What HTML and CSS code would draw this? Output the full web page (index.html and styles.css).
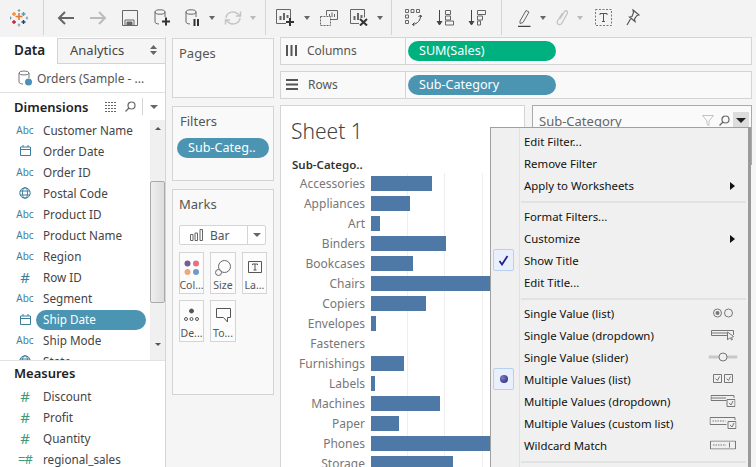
FILE: index.html
```html
<!DOCTYPE html>
<html lang="en">
<head>
    <meta charset="UTF-8">
    <title>Sheet 1 - Filter menu</title>
    <link rel="stylesheet" href="styles.css">
</head>
<body>
    <header class="toolbar">
        <div class="tool-group logo-group">
            <svg width="18" height="18" viewBox="0 0 18 18" fill="none" stroke-width="1.4">
                <path d="M9 3v7M5.5 6.500h7" stroke="#e8762d" stroke-width="1.600" transform="translate(0 1)"/>
                <path d="M4 3v4M2 5h4" stroke="#f28e2b"/>
                <path d="M13.500 3v4M11.500 5h4" stroke="#5b9ab5"/>
                <path d="M4 11v4M2 13h4" stroke="#c72035"/>
                <path d="M13.500 11v4M11.500 13h4" stroke="#1f447a"/>
                <path d="M9 0v3M7.700 1.500h2.600M9 14.500v3M7.700 16h2.600M.5 7.500v3M-.8 9h2.600M17 7.500v3M15.700 9h2.600" stroke="#7b98ad" stroke-width="1"/>
            </svg>
        </div>
        <div class="tool-group g1">
            <span class="tool"><svg width="18" height="14" viewBox="0 0 18 14" fill="none" stroke="#666" stroke-width="2"><path d="M17 7H2M8 1 2 7l6 6"/></svg></span>
            <span class="tool"><svg width="18" height="14" viewBox="0 0 18 14" fill="none" stroke="#bbb" stroke-width="2"><path d="M1 7h15M10 1l6 6-6 6"/></svg></span>
            <span class="tool"><svg width="16" height="16" viewBox="0 0 16 16" fill="none" stroke="#666"><path d="M.5.500h15v15H.5zM3 15.500V10h9v5.500"/><path d="M5 12h5v3.500H5z" fill="#666"/></svg></span>
            <span class="tool"><svg width="17" height="17" viewBox="0 0 17 17" fill="none" stroke="#666"><ellipse cx="6" cy="3" rx="5" ry="2.200"/><path d="M1 3v10c0 1 1.500 1.800 4 2M11 3v5"/><path d="M12 8.500v8M8 12.500h8" stroke="#333" stroke-width="2"/></svg></span>
            <span class="tool w28"><svg width="15" height="17" viewBox="0 0 15 17" fill="none" stroke="#666"><ellipse cx="6" cy="3" rx="5" ry="2.200"/><path d="M1 3v10c0 1 1.500 1.800 4 2M11 3v5"/><path d="M9.500 10v7M13 10v7" stroke="#333" stroke-width="2"/></svg></span>
            <span class="caret"></span>
            <span class="tool w28"><svg width="18" height="16" viewBox="0 0 18 16" fill="none" stroke="#c4c4c4" stroke-width="1.500"><path d="M2 8a7 6.500 0 0 1 12-4l2 2M16 8a7 6.500 0 0 1-12 4l-2-2"/><path d="M16.500 1.500V6H12M1.500 14.500V10H6"/></svg></span>
            <span class="caret light"></span>
        </div>
        <div class="tool-group g2">
            <span class="tool"><svg width="18" height="17" viewBox="0 0 18 17" fill="none" stroke="#666"><path d="M10 14.500H.5V.5h14v9"/><path d="M4.500 11V7M8 11V4M11.500 9V6" stroke-width="2"/><path d="M14 9v8M10 13h8" stroke="#333" stroke-width="2"/></svg></span>
            <span class="caret"></span>
            <span class="tool w30"><svg width="18" height="16" viewBox="0 0 18 16" fill="none" stroke="#666"><path d="M6.500 5.500V.5h11v9H11"/><path d="M9.500 7V4M12 7V2.500M14.500 7V4"/><path d="M.5 6.500h10v9H.5z" fill="#f3f3f3" stroke-dasharray="2 1"/></svg></span>
            <span class="tool w30"><svg width="18" height="17" viewBox="0 0 18 17" fill="none" stroke="#666"><path d="M9 14.500H.5V.5h14v8"/><path d="M4.500 11V7M8 11V4M11.500 9V6" stroke-width="2"/><path d="m10 10 7 6.500M17 10l-7 6.500" stroke="#333" stroke-width="2"/></svg></span>
            <span class="caret"></span>
        </div>
        <div class="tool-group g3">
            <span class="tool"><svg width="17" height="17" viewBox="0 0 17 17" fill="none" stroke="#666"><path d="M.5.500h3v3h-3zM6 .5h3v3H6zM11.500.5h3v3h-3zM.5 6h3v3h-3zM.5 11.500h3v3h-3z"/><path d="M15.500 6c.5 5-3 9-8 9.500M9.500 13.500l-2 2 2 1.500M13.500 8l2-2 1.500 2" stroke="#444"/></svg></span>
            <span class="tool"><svg width="18" height="16" viewBox="0 0 18 16" fill="none" stroke="#666"><path d="M3.500 0v14" stroke="#444"/><path d="M1 11l2.500 4L6 11" fill="#444" stroke="#444"/><path d="M9.500.5h5v4h-5zM9.500 6h5v4h-5zM9.500 11h8v4h-8z"/></svg></span>
            <span class="tool"><svg width="18" height="16" viewBox="0 0 18 16" fill="none" stroke="#666"><path d="M3.500 0v14" stroke="#444"/><path d="M1 11l2.500 4L6 11" fill="#444" stroke="#444"/><path d="M9.500.5h8v4h-8zM9.500 6h5v4h-5zM9.500 11h3v4h-3z"/></svg></span>
        </div>
        <div class="tool-group g4">
            <span class="tool w26"><svg width="13" height="18" viewBox="0 0 13 18" fill="none" stroke="#666"><path d="M2 12 8 1.500l3 1.500-6 10.500-3 1z"/><path d="M0 17.500h12.500" stroke="#444" stroke-width="1.500"/></svg></span>
            <span class="caret"></span>
            <span class="tool w24"><svg width="13" height="18" viewBox="0 0 13 18" fill="none" stroke="#c4c4c4" stroke-width="1.300"><path d="M4 10 8.500 2.500c1-1.500 3.500-.5 3 1.500L6 14c-1.500 3-6 1.500-4.500-2L6.500 4"/></svg></span>
            <span class="caret light"></span>
            <span class="tool"><svg width="17" height="17" viewBox="0 0 17 17" fill="none"><path d="M.5.500h16v16H.5z" stroke="#777" stroke-dasharray="2 1.500"/><path d="M5 6V4.500h7V6M8.500 4.500v8M7 12.500h3" stroke="#555"/></svg></span>
            <span class="tool w28"><svg width="14" height="17" viewBox="0 0 14 17" fill="none" stroke="#555" stroke-width="1.200"><path d="M7 1l6 5-2 .5-2.500 3.500.5 2.500L3.500 8 6 7.500 7.500 3.500zM4.500 10 1 16"/></svg></span>
        </div>
    </header>

    <div class="workspace">
        <aside class="data-pane">
            <div class="tabs">
                <div class="tab active">Data</div>
                <div class="tab">Analytics
                    <svg width="7" height="10" viewBox="0 0 7 10" fill="#666"><path d="M3.500 0 7 4H0zM0 6h7l-3.500 4z"/></svg>
                </div>
            </div>
            <div class="source">
                <svg width="14" height="16" viewBox="0 0 14 16" fill="none" stroke="#777"><ellipse cx="6" cy="3" rx="5" ry="2"/><path d="M1 3v9c0 1.300 2 2 4 2M11 3v5"/><circle cx="10.500" cy="12" r="3.500" fill="#4a90b8" stroke="none"/></svg>
                <span>Orders (Sample - ...</span>
            </div>
            <div class="pane-head">
                <b>Dimensions</b>
                <svg class="grid-ico" width="12" height="10" viewBox="0 0 12 10" stroke="#666"><path d="M0 .5h12M0 3.500h12M0 6.500h12M0 9.500h12" stroke-dasharray="2 1"/></svg>
                <svg class="find-ico" width="11" height="11" viewBox="0 0 11 11" fill="none" stroke="#666" stroke-width="1.200"><circle cx="6.500" cy="4.500" r="3.500"/><path d="M4 7 .5 10.500"/></svg>
                <span class="head-caret"></span>
            </div>
            <div class="dim-wrap">
                <ul class="fields">
                    <li><i class="abc">Abc</i>Customer Name</li>
                    <li><i><svg width="11" height="11" viewBox="0 0 11 11" fill="none" stroke="#3f7f9c"><path d="M.5 2h10v8.500H.5zM.5 4.500h10M3 0v2M8 0v2"/></svg></i>Order Date</li>
                    <li><i class="abc">Abc</i>Order ID</li>
                    <li><i><svg width="12" height="12" viewBox="0 0 12 12" fill="none" stroke="#3f7f9c"><circle cx="6" cy="6" r="5.200"/><ellipse cx="6" cy="6" rx="2.500" ry="5.200"/><path d="M1 4h10M1 8h10"/></svg></i>Postal Code</li>
                    <li><i class="abc">Abc</i>Product ID</li>
                    <li><i class="abc">Abc</i>Product Name</li>
                    <li><i class="abc">Abc</i>Region</li>
                    <li><i class="num">#</i>Row ID</li>
                    <li><i class="abc">Abc</i>Segment</li>
                    <li class="selected"><i><svg width="11" height="11" viewBox="0 0 11 11" fill="none" stroke="#3f7f9c"><path d="M.5 2h10v8.500H.5zM.5 4.500h10M3 0v2M8 0v2"/></svg></i><span>Ship Date</span></li>
                    <li><i class="abc">Abc</i>Ship Mode</li>
                    <li><i><svg width="12" height="12" viewBox="0 0 12 12" fill="none" stroke="#3f7f9c"><circle cx="6" cy="6" r="5.200"/><ellipse cx="6" cy="6" rx="2.500" ry="5.200"/><path d="M1 4h10M1 8h10"/></svg></i>State</li>
                </ul>
                <div class="scrollbar">
                    <span class="arrow up"></span>
                    <span class="thumb"></span>
                    <span class="arrow down"></span>
                </div>
            </div>
            <div class="pane-head measures"><b>Measures</b></div>
            <ul class="fields green">
                <li><i class="num">#</i>Discount</li>
                <li><i class="num">#</i>Profit</li>
                <li><i class="num">#</i>Quantity</li>
                <li><i class="num calc">=#</i>regional_sales</li>
            </ul>
        </aside>

        <section class="cards">
            <div class="card pages"><h4>Pages</h4></div>
            <div class="card filters">
                <h4>Filters</h4>
                <div class="pill blue">Sub-Categ..</div>
            </div>
            <div class="card marks">
                <h4>Marks</h4>
                <div class="mark-select">
                    <svg width="13" height="12" viewBox="0 0 13 12" fill="none" stroke="#666"><path d="M.5 5.500h2.500v6H.5zM5 4h2.500v7.500H5zM10 .5h2.500v11H10z"/></svg>
                    <span>Bar</span>
                    <em></em>
                </div>
                <div class="mark-grid">
                    <div class="mark-btn">
                        <svg width="16" height="16" viewBox="0 0 16 16"><circle cx="3.500" cy="3.500" r="3" fill="#7b5c8f"/><circle cx="12" cy="3.500" r="3" fill="#e8707a"/><circle cx="3.500" cy="12" r="3" fill="#f0a878"/><circle cx="12" cy="12" r="3" fill="#6f9bc8"/></svg>
                        <span>Col...</span>
                    </div>
                    <div class="mark-btn">
                        <svg width="16" height="16" viewBox="0 0 16 16" fill="none" stroke="#666"><circle cx="9.500" cy="6.500" r="6"/><circle cx="3.500" cy="12.500" r="3" fill="#f8f8f8"/></svg>
                        <span>Size</span>
                    </div>
                    <div class="mark-btn">
                        <svg width="14" height="14" viewBox="0 0 14 14" fill="none" stroke="#555"><path d="M.5 1.500h13v11H.5zM4.500 5V4h5v1M7 4v6M5.500 10h3"/></svg>
                        <span>La...</span>
                    </div>
                    <div class="mark-btn">
                        <svg width="15" height="14" viewBox="0 0 15 14" fill="none" stroke="#555"><circle cx="7.500" cy="3" r="2" fill="#555"/><circle cx="2" cy="11" r="1.500"/><circle cx="7.500" cy="11" r="1.500"/><circle cx="13" cy="11" r="1.500"/></svg>
                        <span>De...</span>
                    </div>
                    <div class="mark-btn">
                        <svg width="15" height="15" viewBox="0 0 15 15" fill="none" stroke="#555"><path d="M.5.500h14v9h-3V14l-4-4.500h-7z"/></svg>
                        <span>To...</span>
                    </div>
                </div>
            </div>
        </section>

        <main class="view">
            <div class="shelf">
                <div class="shelf-label"><svg width="11" height="11" viewBox="0 0 11 11" stroke="#555" stroke-width="2"><path d="M1 0v11M5.500 0v11M10 0v11"/></svg>Columns</div>
                <div class="shelf-body"><div class="pill green-pill">SUM(Sales)</div></div>
            </div>
            <div class="shelf">
                <div class="shelf-label"><svg width="12" height="11" viewBox="0 0 12 11" stroke="#555" stroke-width="2"><path d="M0 1h12M0 5.500h12M0 10h12"/></svg>Rows</div>
                <div class="shelf-body"><div class="pill blue">Sub-Category</div></div>
            </div>
            <div class="canvas">
                <div class="sheet">
                    <h1>Sheet 1</h1>
                    <div class="axis-title">Sub-Catego..</div>
                    <div class="chart">
                        <div class="row"><label>Accessories</label><div class="bar" style="width:61px"></div></div>
                        <div class="row"><label>Appliances</label><div class="bar" style="width:39px"></div></div>
                        <div class="row"><label>Art</label><div class="bar" style="width:9px"></div></div>
                        <div class="row"><label>Binders</label><div class="bar" style="width:75px"></div></div>
                        <div class="row"><label>Bookcases</label><div class="bar" style="width:42px"></div></div>
                        <div class="row"><label>Chairs</label><div class="bar" style="width:145px"></div></div>
                        <div class="row"><label>Copiers</label><div class="bar" style="width:55px"></div></div>
                        <div class="row"><label>Envelopes</label><div class="bar" style="width:5px"></div></div>
                        <div class="row"><label>Fasteners</label></div>
                        <div class="row"><label>Furnishings</label><div class="bar" style="width:33px"></div></div>
                        <div class="row"><label>Labels</label><div class="bar" style="width:4px"></div></div>
                        <div class="row"><label>Machines</label><div class="bar" style="width:69px"></div></div>
                        <div class="row"><label>Paper</label><div class="bar" style="width:28px"></div></div>
                        <div class="row"><label>Phones</label><div class="bar" style="width:150px"></div></div>
                        <div class="row"><label>Storage</label><div class="bar" style="width:82px"></div></div>
                    </div>
                </div>
                <div class="filter-card">
                    <span class="filter-title">Sub-Category</span>
                    <svg width="12" height="11" viewBox="0 0 12 11" fill="none" stroke="#c4c4c4"><path d="M.5.500h11L7 6v4.500L5 9.500V6z"/></svg>
                    <svg width="11" height="11" viewBox="0 0 11 11" fill="none" stroke="#666" stroke-width="1.200"><circle cx="6.500" cy="4.500" r="3.500"/><path d="M4 7 .5 10.500"/></svg>
                    <span class="filter-caret"></span>
                </div>
            </div>
        </main>
    </div>

    <nav class="menu">
        <div class="item">Edit Filter...</div>
        <div class="item">Remove Filter</div>
        <div class="item sub">Apply to Worksheets</div>
        <hr>
        <div class="item">Format Filters...</div>
        <div class="item sub">Customize</div>
        <div class="item">
            <span class="mark-box"><svg width="11" height="11" viewBox="0 0 11 11" fill="none" stroke="#23238e" stroke-width="1.800"><path d="M1.500 6 4 9.500 9.500 1"/></svg></span>
            Show Title
        </div>
        <div class="item">Edit Title...</div>
        <hr>
        <div class="item">Single Value (list)
            <svg class="kind" width="21" height="10" viewBox="0 0 21 10" fill="none" stroke="#777"><circle cx="5" cy="5" r="4"/><circle cx="5" cy="5" r="2" fill="#777" stroke="none"/><circle cx="16" cy="5" r="4"/></svg>
        </div>
        <div class="item">Single Value (dropdown)
            <svg class="kind" width="24" height="12" viewBox="0 0 24 12" fill="none" stroke="#777"><path d="M16 6.500H.5v-5h22V6M.5 4h16"/><path d="M16.500 3v8l2-2h1l1 2 1-.5-1-2 2-1z" fill="#efefef"/></svg>
        </div>
        <div class="item">Single Value (slider)
            <svg class="kind" width="29" height="10" viewBox="0 0 29 10" fill="none"><path d="M0 5h29" stroke="#c8c8c8" stroke-width="3"/><circle cx="14.500" cy="5" r="4" fill="#efefef" stroke="#777"/></svg>
        </div>
        <div class="item">
            <span class="mark-box"><span class="dot"></span></span>
            Multiple Values (list)
            <svg class="kind" width="20" height="10" viewBox="0 0 20 10" fill="none" stroke="#777"><path d="M.5.500h8v8h-8zM11.500.5h8v8h-8zM2.500 4.500l2 2 2-4M13.500 4.500l2 2 2-4"/></svg>
        </div>
        <div class="item">Multiple Values (dropdown)
            <svg class="kind" width="25" height="12" viewBox="0 0 25 12" fill="none" stroke="#777"><path d="M16 5.500H.5v-5h23V3M.5 3h15"/><path d="M16.500 4.500h8v7h-8zM18.500 8l2 2 2-4"/></svg>
        </div>
        <div class="item">Multiple Values (custom list)
            <svg class="kind" width="27" height="12" viewBox="0 0 27 12" fill="none" stroke="#777"><path d="M17 7.500H.5v-7h25V3"/><path d="M3 4h13" stroke-dasharray="1.500 1"/><path d="M18.500 4.500h8v7h-8zM20.500 8l2 2 2-4"/></svg>
        </div>
        <div class="item">Wildcard Match
            <svg class="kind" width="26" height="9" viewBox="0 0 26 9" fill="none" stroke="#777"><path d="M.5.500h25v8H.5z"/><path d="M3 4.500h13" stroke-dasharray="1.500 1"/><path d="M19.500 2v5"/></svg>
        </div>
        <hr>
    </nav>
</body>
</html>
```

FILE: styles.css
```css
* {
    box-sizing: border-box;
}
html, body {
    margin: 0;
    height: 467px;
    overflow: hidden;
}
body {
    position: relative;
    background: #f5f5f5;
    font-family: "Noto Sans", "Open Sans", sans-serif;
    font-size: 12px;
    color: #333;
}

/* toolbar */
.toolbar {
    display: flex;
    height: 37px;
    background: #f3f3f3;
}
.tool-group {
    display: flex;
    align-items: center;
    height: 35px;
    border-right: 1px solid #d4d4d4;
}
.logo-group {
    width: 44px;
    padding-left: 10px;
}
.g1 {
    width: 222px;
    padding-left: 6px;
}
.g2 {
    width: 126px;
    padding-left: 3px;
}
.g3 {
    width: 110px;
    padding-left: 5px;
}
.g4 {
    flex: 1;
    border-right: none;
    padding-left: 9px;
}
.tool {
    display: flex;
    justify-content: center;
    width: 32px;
}
.tool.w24 { width: 24px; }
.tool.w26 { width: 26px; }
.tool.w28 { width: 28px; }
.tool.w30 { width: 30px; }
.caret {
    width: 0;
    height: 0;
    margin: 0 4px 0 3px;
    border: 4px solid transparent;
    border-top-color: #666;
    border-bottom: none;
    border-left-width: 3.500px;
    border-right-width: 3.500px;
}
.caret.light {
    border-top-color: #bbb;
}

.workspace {
    display: flex;
    height: 430px;
}

/* data pane */
.data-pane {
    width: 166px;
    height: 430px;
    flex-shrink: 0;
    overflow: hidden;
    background: #fff;
    border-right: 1px solid #d4d4d4;
}
.tabs {
    display: flex;
    height: 26px;
    margin-top: 1px;
}
.tab {
    display: flex;
    align-items: center;
    justify-content: space-between;
    flex: 1;
    padding: 0 8px 2px 12px;
    font-size: 13px;
    color: #444;
    background: #f5f5f5;
    border-left: 1px solid #d4d4d4;
    border-top: 1px solid #d4d4d4;
    border-bottom: 1px solid #d4d4d4;
}
.tab.active {
    flex: 0 0 57px;
    padding-left: 14px;
    font-size: 13.500px;
    font-weight: 600;
    color: #222;
    background: #fff;
    border: none;
}
.source {
    display: flex;
    align-items: center;
    gap: 5px;
    height: 29px;
    padding-left: 18px;
    color: #555;
    border-bottom: 1px solid #e2e2e2;
}
.pane-head {
    display: flex;
    align-items: center;
    height: 27px;
    padding-left: 14px;
    font-size: 13px;
    color: #222;
}
.pane-head b {
    font-weight: 600;
}
.grid-ico {
    margin-left: 17px;
}
.find-ico {
    margin-left: 8px;
}
.head-caret {
    width: 18px;
    height: 17px;
    margin-left: 6px;
    border-left: 1px solid #d4d4d4;
    position: relative;
}
.head-caret::after {
    content: "";
    position: absolute;
    left: 7px;
    top: 7px;
    border: 4px solid transparent;
    border-top-color: #666;
    border-bottom: none;
}
.dim-wrap {
    display: flex;
    height: 241px;
    overflow: hidden;
    border-bottom: 1px solid #e2e2e2;
}
.fields {
    flex: 1;
    margin: 0;
    padding: 0;
    list-style: none;
    font-size: 11.700px;
}
.fields li {
    display: flex;
    align-items: center;
    height: 21px;
    padding-bottom: 2px;
    color: #444;
}
.fields i {
    display: flex;
    align-items: center;
    justify-content: center;
    width: 36px;
    padding-left: 14px;
    margin-right: 7px;
    font-style: normal;
    font-size: 10px;
    color: #3f7f9c;
}
.fields i.num {
    font-size: 15px;
}
.fields i.calc {
    font-size: 13px;
    letter-spacing: -1px;
}
.green i {
    color: #3f9a78;
}
.fields .selected {
    margin-right: 4px;
    padding-bottom: 0;
}
.selected span {
    flex: 1;
    height: 20px;
    line-height: 18px;
    margin-left: -7px;
    padding-left: 7px;
    color: #fff;
    background: #4b95b3;
    border-radius: 10px;
}
.scrollbar {
    display: flex;
    flex-direction: column;
    align-items: center;
    width: 15px;
    flex-shrink: 0;
    background: #f0f0f0;
}
.arrow {
    border: 3.500px solid transparent;
}
.arrow.up {
    margin-top: 7px;
    border-bottom-color: #555;
    border-top: none;
}
.arrow.down {
    margin-top: 40px;
    border-top-color: #555;
    border-bottom: none;
}
.thumb {
    width: 15px;
    height: 122px;
    margin-top: 51px;
    background: linear-gradient(90deg, #eee, #ddd);
    border: 1px solid #aaa;
    border-radius: 2px;
}
.measures {
    height: 25px;
    padding-bottom: 2px;
}

/* shelves, cards */
.cards {
    display: flex;
    flex-direction: column;
    gap: 8px;
    width: 114px;
    flex-shrink: 0;
    padding: 1px 0 0 6px;
}
.card {
    width: 102px;
    padding: 5px 6px;
    background: #f9f9f9;
    border: 1px solid #d4d4d4;
}
.card h4 {
    margin: 0;
    font-size: 13px;
    line-height: 18px;
    font-weight: 400;
    color: #555;
}
.pages {
    height: 60px;
}
.filters {
    height: 75px;
    padding-left: 4px;
}
.filters h4 {
    padding-left: 3px;
}
.marks {
    height: 206px;
}
.pill {
    display: flex;
    align-items: center;
    height: 20px;
    padding: 0 0 1px 11px;
    color: #fff;
    font-size: 12.600px;
    border-radius: 10px;
}
.blue {
    background: #4b95b3;
}
.green-pill {
    background: #00b180;
}
.filters .pill {
    width: 92px;
    margin-top: 8px;
}
.mark-select {
    display: flex;
    align-items: center;
    width: 87px;
    height: 20px;
    margin-top: 12px;
    padding-left: 10px;
    background: #fff;
    border: 1px solid #d4d4d4;
    border-radius: 2px;
    color: #555;
}
.mark-select span {
    flex: 1;
    margin-left: 7px;
}
.mark-select em {
    width: 18px;
    height: 18px;
    border-left: 1px solid #d4d4d4;
    position: relative;
}
.mark-select em::after {
    content: "";
    position: absolute;
    left: 5px;
    top: 7px;
    border: 4px solid transparent;
    border-top-color: #666;
    border-bottom: none;
}
.mark-grid {
    display: grid;
    grid-template-columns: 25px 26px 25px;
    gap: 6px 6px;
    margin-top: 7px;
}
.mark-btn {
    display: flex;
    flex-direction: column;
    align-items: center;
    justify-content: space-between;
    height: 42px;
    padding: 7px 0 1px;
    font-size: 10.500px;
    color: #555;
    background: #fcfcfc;
    border: 1px solid #d4d4d4;
    white-space: nowrap;
    overflow: hidden;
}
.view {
    flex: 1;
    padding-right: 4px;
}
.shelf {
    display: flex;
    height: 28px;
    margin-bottom: 6px;
    background: #f9f9f9;
    border: 1px solid #d4d4d4;
    color: #555;
}
.shelf-label {
    display: flex;
    align-items: center;
    gap: 10px;
    width: 125px;
    padding: 0 0 2px 5px;
    border-right: 1px solid #d4d4d4;
}
.shelf-body {
    flex: 1;
    padding: 3px 2px;
}
.shelf .pill {
    width: 148px;
}
.canvas {
    display: flex;
    gap: 7px;
    margin-top: 6px;
}
.sheet {
    width: 245px;
    height: 362px;
    padding: 0 0 0 1px;
    background: #fff;
    border: 1px solid #d4d4d4;
    border-bottom: none;
    overflow: hidden;
}
.sheet h1 {
    margin: 11px 0 0 9px;
    font-size: 21px;
    line-height: 28px;
    font-weight: 300;
    color: #444;
}
.axis-title {
    margin: 12px 0 0 10px;
    font-size: 11.500px;
    font-weight: 600;
    line-height: 16px;
    color: #333;
}
.chart {
    background:
        linear-gradient(#eee, #eee) 125px 0 / 1px 100% no-repeat,
        linear-gradient(#eee, #eee) 162px 0 / 1px 100% no-repeat,
        linear-gradient(#eee, #eee) 200px 0 / 1px 100% no-repeat;
}
.row {
    display: flex;
    align-items: center;
    height: 20px;
}
.row label {
    width: 84px;
    padding-right: 1px;
    text-align: right;
    color: #777;
}
.bar {
    height: 15px;
    margin-left: 5px;
    background: #4e79a7;
}
.filter-card {
    display: flex;
    align-items: flex-start;
    gap: 5px;
    width: 220px;
    height: 60px;
    padding: 6px 2px 0 6px;
    background: #fafafa;
    border: 1px solid #aaa;
    color: #666;
}
.filter-title {
    flex: 1;
    font-size: 13px;
    line-height: 18px;
}
.filter-card svg {
    margin-top: 3px;
}
.filter-caret {
    width: 16px;
    height: 16px;
    margin-left: -2px;
    background: #ddd;
    position: relative;
}
.filter-caret::after {
    content: "";
    position: absolute;
    left: 3px;
    top: 6px;
    border: 5px solid transparent;
    border-top-color: #222;
    border-bottom: none;
}

/* dropdown menu */
.menu {
    position: absolute;
    left: 490px;
    top: 127px;
    width: 261px;
    height: 340px;
    padding: 3px 0 0 29px;
    font-size: 11.400px;
    background: #f0f0f0;
    border: 1px solid #a0a0a0;
    border-right: 3px solid #9a9a9a;
    border-bottom: none;
    color: #111;
}
.menu::before {
    content: "";
    position: absolute;
    left: 28px;
    top: 0;
    bottom: 0;
    width: 1px;
    background: #e0e0e0;
}
.menu hr {
    height: 2px;
    margin: 4px 2px 3px 1px;
    background: #e2e2e2;
    border: none;
}
.item {
    display: flex;
    align-items: center;
    position: relative;
    height: 22px;
    padding: 0 0 2px 4px;
}
.sub::after {
    content: "";
    position: absolute;
    right: 13px;
    top: 7px;
    border: 4px solid transparent;
    border-left: 5px solid #111;
    border-right: none;
}
.kind {
    position: absolute;
    left: 203px;
    top: calc(50% - 1px);
    transform: translate(-50%, -50%);
}
.mark-box {
    position: absolute;
    left: -27px;
    top: -1px;
    display: flex;
    align-items: center;
    justify-content: center;
    width: 21px;
    height: 22px;
    background: #eaf0fb;
    border: 1px solid #b8d0f0;
    border-radius: 2px;
}
.dot {
    width: 8px;
    height: 8px;
    background: radial-gradient(circle at 35% 35%, #7a7ac8, #23236e);
    border-radius: 50%;
}
```
